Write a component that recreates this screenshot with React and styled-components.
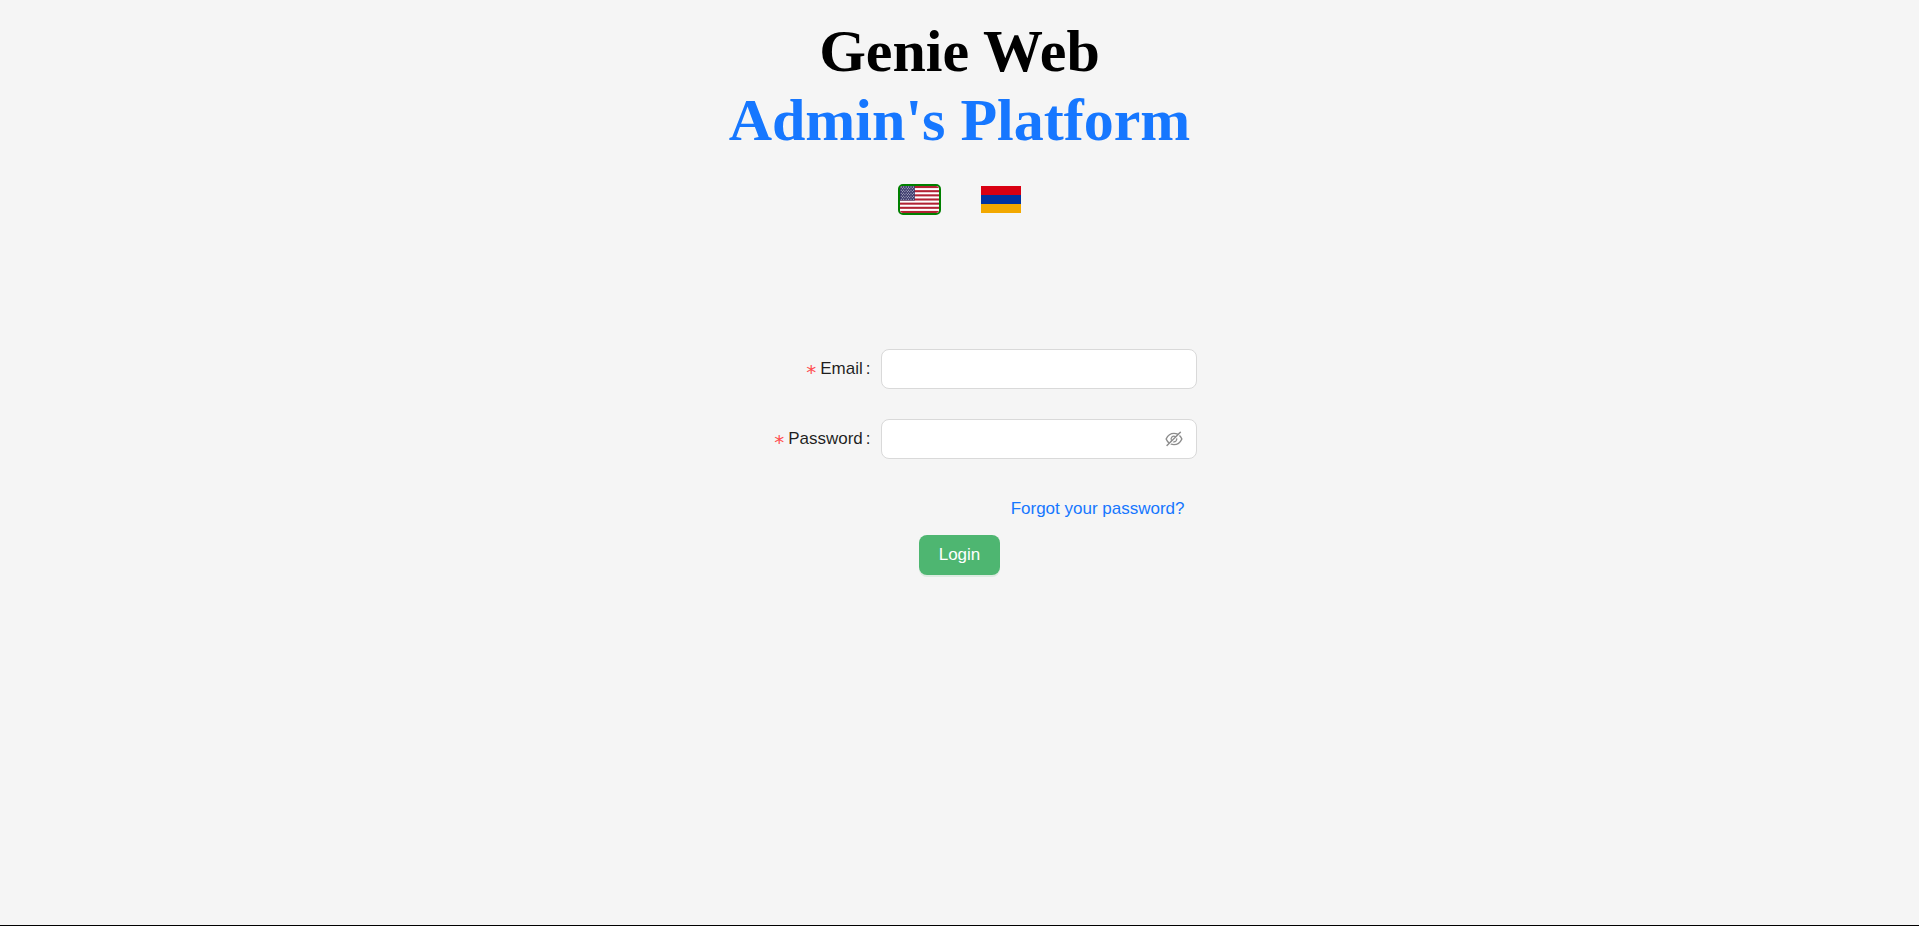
import React, { useState } from "react";
import styled, { createGlobalStyle } from "styled-components";
import { AiOutlineEye, AiOutlineEyeInvisible } from "react-icons/ai";

const GlobalStyle = createGlobalStyle`
  *, *::before, *::after { box-sizing: border-box; }
  body {
    margin: 0;
    background: #f5f5f5;
    color: rgba(0, 0, 0, 0.88);
    font-family: "Liberation Sans", Arial, sans-serif;
    font-size: 17px;
    line-height: 28px;
  }
`;

const Page = styled.main`
  display: flex;
  flex-direction: column;
  align-items: center;
  min-height: 100vh;
  padding-top: 17px;
  border-bottom: 1px solid #000;
`;

const Title = styled.h1`
  margin: 0;
  color: #000;
  font: bold 60px/69px "Liberation Serif", "Times New Roman", serif;
  text-align: center;
`;

const TitleAccent = styled.span`
  display: block;
  color: #1677ff;
`;

const Languages = styled.div`
  display: flex;
  align-items: center;
  gap: 40px;
  margin-top: 29px;
`;

const FlagButton = styled.button`
  display: block;
  padding: 0;
  border: ${({ $active }) => ($active ? "2px solid #008000" : "0")};
  border-radius: ${({ $active }) => ($active ? "5px" : "0")};
  background: none;
  overflow: hidden;
  cursor: pointer;

  svg {
    display: block;
    width: ${({ $active }) => ($active ? "39px" : "40px")};
    height: 27px;
  }
`;

const Form = styled.form`
  display: flex;
  flex-direction: column;
  width: 100%;
  max-width: 474px;
  margin-top: 134px;
`;

const Field = styled.div`
  display: grid;
  grid-template-columns: 1fr 2fr;
  align-items: center;
  margin-bottom: 30px;
`;

const Label = styled.label`
  display: flex;
  align-items: center;
  justify-content: flex-end;
  height: 40px;
  padding-right: 10px;

  &::after {
    content: ":";
    margin-left: 3px;
  }
`;

const Required = styled.span`
  margin-right: 4px;
  padding-top: 6px;
  color: #ff4d4f;
  font-family: "DejaVu Sans", sans-serif;
  font-size: 20px;
`;

const Control = styled.div`
  display: flex;
  align-items: center;
  height: 40px;
  padding: 0 12px;
  border: 1px solid #d9d9d9;
  border-radius: 8px;
  background: #fff;

  &:focus-within { border-color: #1677ff; }
`;

const Input = styled.input`
  flex: 1;
  min-width: 0;
  padding: 0;
  border: 0;
  outline: 0;
  background: transparent;
  color: inherit;
  font: inherit;
`;

const VisibilityButton = styled.button`
  display: flex;
  padding: 0;
  border: 0;
  background: none;
  color: rgba(0, 0, 0, 0.45);
  cursor: pointer;
`;

const ForgotLink = styled.a`
  align-self: flex-end;
  margin-right: 12px;
  margin-top: 6px;
  color: #1677ff;
  text-decoration: none;
`;

const LoginButton = styled.button`
  align-self: center;
  height: 40px;
  margin-top: 12px;
  padding: 0 20px;
  border: 0;
  border-radius: 8px;
  background: #4eb671;
  box-shadow: 0 2px 0 rgba(5, 145, 50, 0.1);
  color: #fff;
  font: inherit;
  cursor: pointer;
`;

const STRIPES = [0, 2, 4, 6, 8, 10, 12];
const STARS = Array.from({ length: 9 }, (_, row) =>
  Array.from({ length: row % 2 ? 5 : 6 }, (_, col) => ({
    x: 13 + col * 25 + (row % 2 ? 12.5 : 0),
    y: 11 + row * 14.5,
  }))
).flat();

function UsFlag() {
  return (
    <svg viewBox="0 0 400 260" preserveAspectRatio="none" aria-hidden="true">
      <rect width="400" height="260" fill="#fff" />
      {STRIPES.map((n) => (
        <rect key={n} y={n * 20} width="400" height="20" fill="#b22234" />
      ))}
      <rect width="152" height="140" fill="#3c3b6e" />
      {STARS.map(({ x, y }) => (
        <path
          key={`${x}-${y}`}
          transform={`translate(${x} ${y})`}
          d="M0-8 1.9-2.6H7.6L3 1 4.7 6.5 0 3.1-4.7 6.5-3 1-7.6-2.6H-1.9Z"
          fill="#fff"
        />
      ))}
    </svg>
  );
}

function ArmenianFlag() {
  return (
    <svg viewBox="0 0 40 27" preserveAspectRatio="none" aria-hidden="true">
      <rect width="40" height="9" fill="#d90012" />
      <rect y="9" width="40" height="9" fill="#0033a0" />
      <rect y="18" width="40" height="9" fill="#f2a800" />
    </svg>
  );
}

export default function App() {
  const [language, setLanguage] = useState("en");
  const [visible, setVisible] = useState(false);

  return (
    <>
      <GlobalStyle />
      <Page>
        <Title>
          Genie Web
          <TitleAccent>Admin's Platform</TitleAccent>
        </Title>
        <Languages>
          <FlagButton type="button" aria-label="English" $active={language === "en"} onClick={() => setLanguage("en")}>
            <UsFlag />
          </FlagButton>
          <FlagButton type="button" aria-label="Armenian" $active={language === "hy"} onClick={() => setLanguage("hy")}>
            <ArmenianFlag />
          </FlagButton>
        </Languages>
        <Form onSubmit={(event) => event.preventDefault()}>
          <Field>
            <Label htmlFor="email">
              <Required aria-hidden="true">*</Required>Email
            </Label>
            <Control>
              <Input id="email" type="email" required />
            </Control>
          </Field>
          <Field>
            <Label htmlFor="password">
              <Required aria-hidden="true">*</Required>Password
            </Label>
            <Control>
              <Input id="password" type={visible ? "text" : "password"} required />
              <VisibilityButton
                type="button"
                aria-label={visible ? "Hide password" : "Show password"}
                onClick={() => setVisible(!visible)}
              >
                {visible ? <AiOutlineEye size={20} /> : <AiOutlineEyeInvisible size={20} />}
              </VisibilityButton>
            </Control>
          </Field>
          <ForgotLink href="#forgot">Forgot your password?</ForgotLink>
          <LoginButton type="submit">Login</LoginButton>
        </Form>
      </Page>
    </>
  );
}
